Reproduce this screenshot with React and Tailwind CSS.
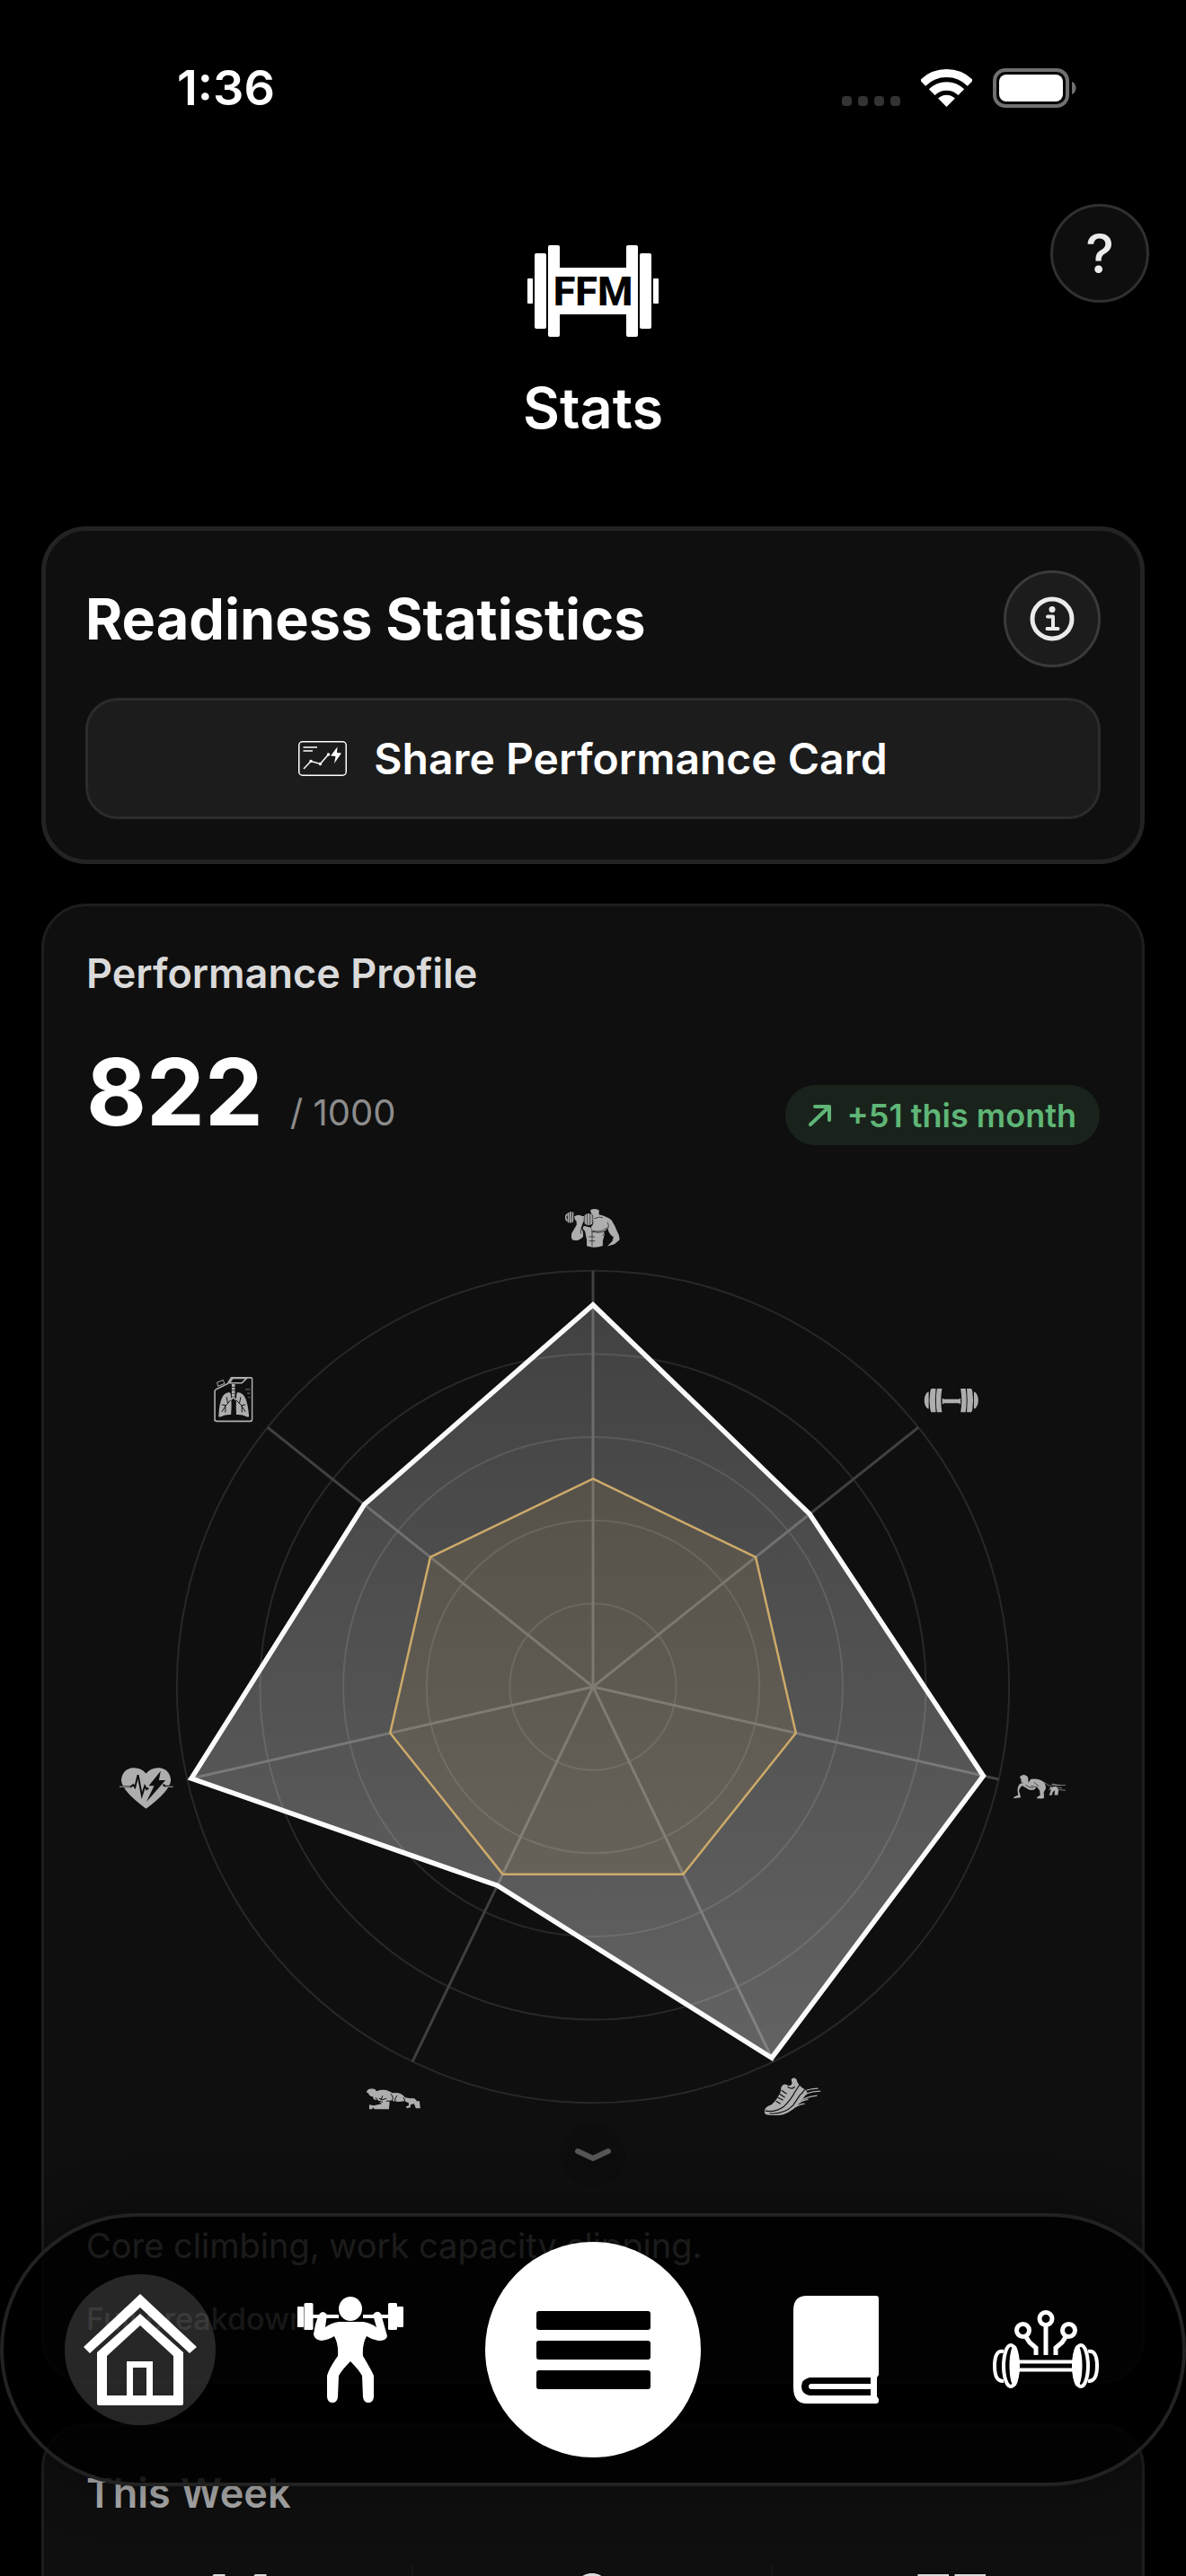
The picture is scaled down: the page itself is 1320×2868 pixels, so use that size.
const CENTER = { x: 565, y: 558 };
const RADIUS = 464;
const RINGS = [0.2, 0.4, 0.6, 0.8, 1];
const SCORES = [0.918, 0.666, 0.962, 0.99, 0.53, 0.99, 0.703];
const BASELINE = [0.5, 0.5, 0.5, 0.5, 0.5, 0.5, 0.5];

const WEEK = [
    { id: 'sessions', value: '44' },
    { id: 'missed', value: '0' },
    { id: 'score', value: '77' },
];

const pointAt = (i, value) => {
    const angle = -Math.PI / 2 + (i * 2 * Math.PI) / 7;
    return [CENTER.x + Math.cos(angle) * RADIUS * value, CENTER.y + Math.sin(angle) * RADIUS * value];
};

const toPoints = (values) => values.map((v, i) => pointAt(i, v).map((n) => n.toFixed(1)).join(',')).join(' ');

const StatusBar = () => (
    <div className="flex items-center justify-between pl-[197px] pr-[121px] pt-[66px]">
        <span className="text-[54px] font-semibold leading-[64px]">1:36</span>
        <div className="flex items-center">
            <svg width="66" height="42" viewBox="0 0 66 42" fill="#333">
                {[0, 18, 36, 54].map((x) => <rect key={x} x={x} y="30" width="11" height="11" rx="4" />)}
            </svg>
            <svg className="ml-[22px]" width="57" height="42" viewBox="0 0 57 42" fill="none" stroke="#fff">
                <path d="M2 15.5a37.5 37.5 0 0 1 53 0" strokeWidth="9" />
                <path d="M12.2 25.700a23 23 0 0 1 32.600 0" strokeWidth="9.500" />
                <path d="M28.500 42l-9.400-9.400a13.300 13.300 0 0 1 18.800 0z" fill="#fff" stroke="none" />
            </svg>
            <svg className="ml-[23px]" width="94" height="44" viewBox="0 0 94 44">
                <rect x="2" y="2" width="81" height="40" rx="12" fill="none" stroke="#707070" strokeWidth="4" />
                <rect x="7" y="7" width="71" height="30" rx="8" fill="#fff" />
                <path d="M88 15c6 2 6 12 0 14z" fill="#707070" />
            </svg>
        </div>
    </div>
);

const Logo = () => (
    <svg width="146" height="102" viewBox="0 0 146 102" fill="#fff">
        <rect x="0" y="37" width="6" height="28" rx="1" />
        <rect x="8" y="9" width="13" height="84" rx="2" />
        <rect x="23" y="0" width="13" height="102" rx="2" />
        <rect x="35" y="25" width="76" height="52" />
        <rect x="110" y="0" width="13" height="102" rx="2" />
        <rect x="125" y="9" width="13" height="84" rx="2" />
        <rect x="140" y="37" width="6" height="28" rx="1" />
        <text x="73" y="67" textAnchor="middle" fill="#000" fontFamily="Roboto, sans-serif" fontWeight="800" fontSize="45">FFM</text>
    </svg>
);

const Header = () => (
    <header className="grid grid-cols-[1fr_auto_1fr] px-[41px] pb-24 pt-[97px]">
        <div className="col-start-2 flex flex-col items-center gap-[43px] pt-[46px]">
            <Logo />
            <h1 className="text-[63px] font-semibold leading-[72px]">Stats</h1>
        </div>
        <button aria-label="Help" className="h-[110px] w-[110px] justify-self-end rounded-full border-[3px] border-[#303030] bg-[#0e0e0e] text-[60px] font-medium leading-[60px] text-[#ebebeb]">
            ?
        </button>
    </header>
);

const InfoIcon = () => (
    <svg width="50" height="50" viewBox="0 0 50 50" fill="none" stroke="#ebebeb">
        <circle cx="25" cy="25" r="22" strokeWidth="5" />
        <circle cx="25" cy="14.500" r="3.500" fill="#ebebeb" stroke="none" />
        <path d="M20 22.500h6v13M19.500 36h12" strokeWidth="4" strokeLinecap="round" strokeLinejoin="round" />
    </svg>
);

const ShareIcon = () => (
    <svg width="54" height="39" viewBox="0 0 54 39" fill="none" stroke="#fff" strokeWidth="1.500">
        <rect x="0.750" y="0.750" width="52.500" height="37.500" rx="4" />
        <path d="M5.500 7H21M5.500 11H16M6 31l8-8.500 10.500 3L33.500 15" />
        <circle cx="14" cy="22.500" r="1" fill="#fff" />
        <circle cx="24.500" cy="25.500" r="1" fill="#fff" />
        <circle cx="33.500" cy="15" r="1" fill="#fff" />
        <path d="M43.500 6.500L36 16.500l5.500.5-1.500 8 8-11.500-5-.5z" fill="#fff" stroke="none" />
    </svg>
);

const ReadinessCard = () => (
    <section className="rounded-[50px] border-[5px] border-[#232323] bg-[#0f0f0f] px-11 pb-[45px] pt-11">
        <div className="flex items-center justify-between">
            <h2 className="text-[63px] font-bold leading-[80px]">Readiness Statistics</h2>
            <button aria-label="About readiness" className="flex h-[108px] w-[108px] items-center justify-center rounded-full border-[3px] border-[#3a3a3a] bg-[#1c1c1c]">
                <InfoIcon />
            </button>
        </div>
        <button className="mt-[34px] flex h-[135px] w-full items-center justify-center gap-[30px] rounded-[36px] border-[3px] border-[#2c2c2c] bg-[#1c1c1c] text-[48px] font-semibold">
            <ShareIcon />
            Share Performance Card
        </button>
    </section>
);

const MuscleIcon = (props) => (
    <svg {...props} viewBox="88 75 183 130">
        <path d="M172 79q14-7 29 0v15q26 6 42 18 13 20 19 38 10 16 8 30l-17 14-24 7 17-17 4-14q-14-10-18-24l-2-10q-4 14-17 16-22 4-36-3l-2-14q12-10 6-38-8-6-9-18z" />
        <path d="M150 132l24 6 3 14q20 6 42 1l1 8-6 22v16q-26 10-54 1v-20l-6-30-8-8z" />
        <path d="M120 99q16-8 27 3l1 16-8 24 7 8 1 18q-16 18-36 12-6-8-3-22l17-30-1-12-6-6z" />
        <path d="M94 92l-6 10 5 14M98 87v34M105 84v38M113 86l-1 34M118 102h46" fill="none" stroke="#aeaeae" strokeWidth="5" />
        <ellipse cx="166" cy="110" rx="18" ry="20" />
        <path d="M153 94v32M162 91v38M171 91v38M179 96v28M167 170q10-4 20 0M168 183h20M178 150v50M180 148q28 8 46-8M184 108q18-8 30-4M213 166l8-10M230 120q6 12 2 20M140 145v14" fill="none" stroke="#0f0f0f" strokeWidth="2" />
    </svg>
);

const DumbbellIcon = (props) => (
    <svg {...props} viewBox="1287 674 183 82">
        <path d="M1302 686v58l-5-2c-6-5-10-16-10-27s4-22 10-27zM1307 686q1-10 5-11h14q-4 40 0 81h-14q-4-1-5-12-5-28 0-58zM1330 675h17q-7 40 0 81h-17q-6-40 0-81zM1348 709h4v2h54v-2h4v19h-4v-3h-54v3h-4z" />
        <path d="M1455 686v58l5-2c6-5 10-16 10-27s-4-22-10-27zM1450 686q-1-10-5-11h-14q4 40 0 81h14q4-1 5-12 5-28 0-58zM1427 675h-17q7 40 0 81h17q6-40 0-81z" />
    </svg>
);

const PushupIcon = (props) => (
    <svg {...props} viewBox="145 167 178 82">
        <path d="M166 176q6-10 18-8 12 3 11 14l1 12 8-12q28-4 46 12 6 10 5 20l-7 12 1 20-8 3-18-2 4-5 9-6-2-16-10-12-8 10q-16 4-26-5-10-6-16-9-8 8-10 18l4 14 2 8-25 3 3-5 13-5-2-18q1-18 13-24-1-8-1-14z" />
        <path d="M248 192l24 16-6 12M272 202l50 1M276 198l28 6M272 216l50 4M290 210l20 3" fill="none" stroke="#aeaeae" strokeWidth="2" />
        <path d="M270 210l20-4 8 12-2 18h-12l2-16-8 6-2 10-10 1 6-16z" />
        <path d="M186 202q10 8 26 10M215 192q8 10 16 14M205 205l18 4M170 196l8-2" fill="none" stroke="#0f0f0f" strokeWidth="2" />
    </svg>
);

const ShoeIcon = (props) => (
    <svg {...props} viewBox="0 0 63 42">
        <path d="M0 37q1-5 8-7 6-5 10-14l1-6q3-5 8-1 3 0 4-3l-1-4q3-4 6 0 1 5 6 9 6 3 6 7-3 2-7 8-8 11-20 15-9 2-19 0-2-1-2-4z" />
        <path d="M1 37q11 2 21-5 8-8 12-16l6-9M6 40q16 1 26-9l8-12q3-2 5-6M13 26l5 3M15 22l6 3M17 18l6 4M19 14l6 4M26 10q5 4 8 0" fill="none" stroke="#0f0f0f" strokeWidth="1.200" />
        <path d="M47 14q8-2 13-2M46 18q8-3 17-3M41 25q8-4 18-5M37 29q6-4 12-5M29 36q8-6 16-7" fill="none" stroke="#aeaeae" strokeWidth="1.200" />
    </svg>
);

const PlankIcon = (props) => (
    <svg {...props} viewBox="0 0 60 24">
        <path d="M0 4q1-4 6-4 4 0 5 3 8-3 14 0l4 2q10-1 14 5l6 1q5-1 7 3l3 0 1 8h-5l-2-5-4 1v3l-4 1-1-2 3-1v-3l-5-2q-8 2-16-1l-1 10H9l-2-2-1 2-3 0 0-5 5 1 9-2-5-4-4-1-1-3q-4 0-5-4-2 0-2-1z" />
        <path d="M10 10l3 4 5 1M14 11q4 3 8 0M18 8l-2 5M27 6q4 4 1 9M34 8q-3 2-2 8M41 10q3 3 1 6M22 14q4-1 5 2" fill="none" stroke="#0f0f0f" strokeWidth="1" />
    </svg>
);

const HeartIcon = (props) => (
    <svg {...props} viewBox="36 1361 180 133">
        <path d="M125 1380q18-20 45-18 34 4 38 40-2 34-83 92-81-58-83-92 4-36 38-40 27-2 45 18z" />
        <path d="M36 1423h38l8-6 6 8 10-40 13 66 10-30 6 10 6-4M216 1422h-26l-8-6" fill="none" stroke="#0f0f0f" strokeWidth="6" />
        <path d="M174 1372l-40 48h18l-26 52 64-70h-22z" fill="#0f0f0f" />
        <path d="M36 1423h36M188 1423h28" stroke="#aeaeae" strokeWidth="3" />
    </svg>
);

const LungsIcon = (props) => (
    <svg {...props} viewBox="350 92 134 156" fill="none" stroke="#aeaeae" strokeWidth="5">
        <path d="M354 244V142q0-5 8-8l36-18 12-20h66q5 0 5 6v135q0 7-6 7H360q-6 0-6-6" />
        <path d="M404 114l10-16h48l-16 16z" />
        <path d="M362 112l20-8 5 12-22 9z" strokeWidth="3" />
        <path d="M458 136h16M464 149h10M468 163h6" strokeWidth="2" />
        <path d="M417 118v48" strokeWidth="11" strokeDasharray="9 2" />
        <path d="M417 163l-16 14M417 163l16 14" />
        <path d="M403 146q-32-2-36 80 0 6 10 2 12-7 32-6 4-50-2-74zM432 146q32-2 38 80 0 6-10 2-12-7-33-6-2-50 2-74z" fill="#aeaeae" stroke="none" />
        <path d="M408 172l-16 18-14 22M392 190l-14-2M390 192v22M398 182l-4-20M426 172l18 18 14 22M444 190l14-2M446 192v22M438 182l4-20" stroke="#0f0f0f" strokeWidth="3" />
    </svg>
);

const RadarChart = () => (
    <svg viewBox="0 0 1130 1044" className="mt-[46px] block h-auto w-full" fill="#aeaeae" role="img" aria-label="Performance profile radar chart">
        <defs>
            <linearGradient id="scoreFill" x1="0" y1="0" x2="0" y2="1">
                <stop offset="0" stopColor="#fff" stopOpacity="0.21" />
                <stop offset="1" stopColor="#fff" stopOpacity="0.35" />
            </linearGradient>
        </defs>
        <g fill="none" stroke="#282828" strokeWidth="2">
            {RINGS.map((r) => <circle key={r} cx={CENTER.x} cy={CENTER.y} r={RADIUS * r} />)}
        </g>
        <g stroke="#404040" strokeWidth="3">
            {SCORES.map((_, i) => {
                const [x, y] = pointAt(i, 1);
                return <line key={i} x1={CENTER.x} y1={CENTER.y} x2={x} y2={y} />;
            })}
        </g>
        <polygon points={toPoints(SCORES)} fill="url(#scoreFill)" stroke="#fafafa" strokeWidth="5.500" />
        <polygon points={toPoints(BASELINE)} fill="#d1a85c" fillOpacity="0.1" stroke="#cdaa6a" strokeWidth="2.500" />

        <MuscleIcon x="534" y="25" width="61" height="43" />
        <DumbbellIcon x="934" y="225" width="61" height="27" />
        <PushupIcon x="1033" y="656" width="60" height="27" />
        <ShoeIcon x="756" y="994" width="63" height="42" />
        <PlankIcon x="312" y="1006" width="61" height="24" />
        <HeartIcon x="37" y="648" width="60" height="46" preserveAspectRatio="none" />
        <LungsIcon x="142" y="211" width="44" height="53" />
    </svg>
);

const ProfileCard = () => (
    <section className="rounded-[50px] border-[3px] border-[#1e1e1e] bg-[#0f0f0f] p-[47px]">
        <h2 className="text-[45px] font-semibold leading-[56px] text-[#dadada]">Performance Profile</h2>
        <div className="mt-[54px] flex items-end justify-between">
            <p className="flex items-baseline gap-[30px] pb-[9px]">
                <span className="text-[103px] font-bold leading-[100px]">822</span>
                <span className="text-[40px] leading-[48px] text-[#8c8c8c]">/ 1000</span>
            </p>
            <p className="flex h-[67px] items-center gap-[18px] rounded-full bg-[#19231b] px-[26px] text-[36px] font-semibold text-[#5fb677]">
                <svg width="25" height="24" viewBox="0 0 25 24" fill="none" stroke="currentColor" strokeWidth="4" strokeLinecap="round" strokeLinejoin="round">
                    <path d="M2 22L22.500 2.500M7 2h16v15" />
                </svg>
                +51 this month
            </p>
        </div>
        <RadarChart />
        <button aria-label="Expand profile" className="mx-auto flex h-[72px] w-[72px] items-center justify-center rounded-full bg-[#0d0d0d]">
            <svg width="42" height="16" viewBox="0 0 42 16" fill="none" stroke="#565656" strokeWidth="6" strokeLinecap="round" strokeLinejoin="round">
                <path d="M4 4l17 8 17-8" />
            </svg>
        </button>
        <p className="mt-[41px] text-[38px] leading-[48px] text-[#b4b4b4]">Core climbing, work capacity slipping.</p>
        <a href="#breakdown" className="mt-9 block text-[34px] font-medium leading-[44px] text-[#9c9c9c]">Full breakdown</a>
    </section>
);

const WeekCard = () => (
    <section className="rounded-[50px] border-[3px] border-[#1e1e1e] bg-[#0f0f0f] pb-12 pt-[47px]">
        <h2 className="px-[47px] text-[45px] font-semibold leading-[56px] text-[#acacac]">This Week</h2>
        <div className="mx-3 mt-[52px] grid grid-cols-3 divide-x-2 divide-[#161616]">
            {WEEK.map((item) => (
                <p key={item.id} className="text-center text-[68px] font-bold leading-[68px] text-[#dcdcdc]">{item.value}</p>
            ))}
        </div>
    </section>
);

const HomeIcon = () => (
    <svg width="126" height="124" viewBox="0 0 126 124" fill="#fff">
        <path d="M63 0l63 59-8 7-55-51L7 66l-7-7z" />
        <path fillRule="evenodd" d="M63 22l48 43v57q0 2-2 2H17q-2 0-2-2V65zM63 35L26 69v44h22V75h29v38h23V69zM55 82v31h15V82z" />
    </svg>
);

const LifterIcon = () => (
    <svg width="118" height="118" viewBox="0 0 118 118" fill="#fff">
        <ellipse cx="59" cy="13.500" rx="13" ry="13.500" />
        <rect x="0" y="11" width="7" height="23" rx="1" />
        <rect x="7.500" y="7" width="10" height="30" rx="1.500" />
        <rect x="101" y="7" width="10" height="30" rx="1.500" />
        <rect x="111" y="11" width="7" height="23" rx="1" />
        <path d="M17 20h29v4H17zM73 20h28v4H73z" />
        <path d="M24 20q4-6 9 0l-2 14q7-5 15-6h27q8 1 15 6l-4-14q5-6 9-1l7 25q-1 5-9 5-8-1-14-5-5 9-4 22 10 17 12 22v24q-1 6-6 6-5 0-6-6l-1-24q-4-7-13-16-9 9-13 16l-1 24q-1 6-6 6t-6-6V88q2-8 12-22 1-13-4-22-6 4-14 5-8-1-9-7 2-14 6-22z" />
    </svg>
);

const BookIcon = () => (
    <svg width="95" height="120" viewBox="0 0 95 120" fill="#fff">
        <path fillRule="evenodd" d="M15 0h77q3 0 3 3v85l-2 3v21l2 3v2q0 3-3 3H15Q0 120 0 102V16Q0 0 15 0zM18 91q-9 2-9 10t9 10h68v-7H20q-3 0-3-3t3-3h66v-7z" />
    </svg>
);

const SmartDumbbellIcon = () => (
    <svg width="118" height="88" viewBox="0 0 118 88" fill="none" stroke="#fff" strokeWidth="5">
        <circle cx="59" cy="9.500" r="7" />
        <circle cx="33.500" cy="22.500" r="7" />
        <circle cx="84.500" cy="22.500" r="7" />
        <path d="M59 17v33M37 30l4 6 7 6v8M81 30l-4 6-7 6v8" />
        <path d="M26 57.500h66M26 66.500h66" strokeWidth="4" />
        <path d="M12 46q-10-2-10 16t10 17M106 46q10-2 10 16t-10 17" strokeWidth="4" />
        <ellipse cx="20" cy="62" rx="8" ry="23" strokeWidth="4" />
        <ellipse cx="98" cy="62" rx="8" ry="23" strokeWidth="4" />
        <ellipse cx="24" cy="62" rx="5.500" ry="23" fill="#fff" stroke="none" />
        <ellipse cx="94" cy="62" rx="5.500" ry="23" fill="#fff" stroke="none" />
    </svg>
);

const NavItem = ({ label, active, children }) => (
    <a
        href={`#${label.toLowerCase()}`}
        aria-label={label}
        className={`flex h-[168px] w-[168px] items-center justify-center rounded-full ${active ? 'bg-white/15' : ''}`}
    >
        {children}
    </a>
);

const BottomNav = () => (
    <nav className="fixed inset-x-0 bottom-[100px] flex h-[304px] items-center justify-between rounded-full border-[4px] border-[#222] bg-black/85 px-[68px] shadow-[0_0_60px_rgba(0,0,0,0.35)]">
        <NavItem label="Home" active><HomeIcon /></NavItem>
        <NavItem label="Workouts"><LifterIcon /></NavItem>
        <button aria-label="Menu" className="flex h-60 w-60 flex-col items-center justify-center gap-3 rounded-full bg-white">
            <span className="h-[21px] w-[127px] rounded-[3px] bg-black" />
            <span className="h-[21px] w-[127px] rounded-[3px] bg-black" />
            <span className="h-[21px] w-[127px] rounded-[3px] bg-black" />
        </button>
        <NavItem label="Library"><BookIcon /></NavItem>
        <NavItem label="Coach"><SmartDumbbellIcon /></NavItem>
    </nav>
);

const App = () => (
    <div className="h-screen overflow-y-auto bg-black font-['Inter',sans-serif] text-white [scrollbar-width:none]">
        <StatusBar />
        <Header />
        <main className="space-y-11 px-[46px]">
            <ReadinessCard />
            <ProfileCard />
            <WeekCard />
        </main>
        <BottomNav />
    </div>
);

export default App;
